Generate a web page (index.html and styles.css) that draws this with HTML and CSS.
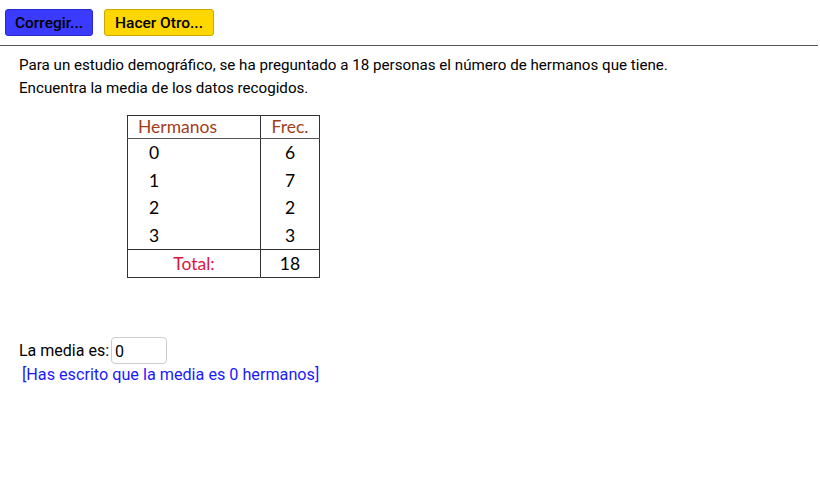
FILE: index.html
```html
<!DOCTYPE html>
<html>
<head>
<meta charset="utf-8">
<link rel="stylesheet" href="styles.css">
</head>
<body>
<div class="toolbar">
  <button class="btn btn-blue">Corregir...</button>
  <button class="btn btn-yellow">Hacer Otro...</button>
</div>
<div class="rule"></div>
<div class="content">
  <p class="statement">Para un estudio demográfico, se ha preguntado a 18 personas el número de hermanos que tiene.</p>
  <p class="statement">Encuentra la media de los datos recogidos.</p>
  <table class="freq">
    <thead>
      <tr><th class="c1">Hermanos</th><th class="c2">Frec.</th></tr>
    </thead>
    <tbody>
      <tr><td class="c1">0</td><td class="c2">6</td></tr>
      <tr><td class="c1">1</td><td class="c2">7</td></tr>
      <tr><td class="c1">2</td><td class="c2">2</td></tr>
      <tr><td class="c1">3</td><td class="c2">3</td></tr>
    </tbody>
    <tfoot>
      <tr><td class="total">Total:</td><td class="c2">18</td></tr>
    </tfoot>
  </table>
  <div class="answer">
    <span class="label">La media es:</span><span class="input">0</span>
  </div>
  <div class="feedback">[Has escrito que la media es 0 hermanos]</div>
</div>
</body>
</html>
```
FILE: styles.css
```css
html, body {
  margin: 0;
  padding: 0;
  background: #fff;
  font-family: Roboto, "Liberation Sans", sans-serif;
  color: #000;
}
.toolbar {
  display: flex;
  gap: 11px;
  padding: 9px 0 0 5px;
  height: 36px;
  box-sizing: border-box;
}
.btn {
  height: 27px;
  font-family: Roboto, sans-serif;
  font-size: 15.5px;
  font-weight: 500;
  color: #000;
  border-radius: 3px;
  padding: 0 6px;
  margin: 0;
  line-height: 27px;
}
.btn-blue {
  width: 88px;
  background: #3b3bff;
  border: 1px solid #2a2ad0;
}
.btn-yellow {
  width: 110px;
  background: #ffd700;
  border: 1px solid #c9a800;
}
.rule {
  margin-top: 9px;
  height: 1px;
  border-top: 1px solid #555;
  width: 818px;
}
.content {
  padding-left: 19px;
}
.statement {
  margin: 0;
  font-size: 15.15px;
  line-height: 23px;
}
.statement:first-child {
  margin-top: 7px;
}
.freq {
  margin: 15px 0 0 108px;
  border-collapse: collapse;
  font-family: Lato, "DejaVu Sans", sans-serif;
  font-size: 17.5px;
  border: 1px solid #333;
}
.freq th {
  font-weight: normal;
  color: #a0401a;
  height: 22px;
  padding: 0;
  border-bottom: 1px solid #555;
  line-height: 22px;
}
.freq th.c1 { text-align: left; padding-left: 10px; }
.freq .c1 { width: 122px; border-right: 1px solid #333; }
.freq .c2 { width: 58px; text-align: center; }
.freq th.c2 { border-left: 1px solid #333; }
.freq tbody td {
  height: 27.5px;
  padding: 0;
  line-height: 27px;
}
.freq tbody td.c1 { padding-left: 21px; width: 111px; }
.freq tfoot td {
  height: 27px;
  padding: 0;
  border-top: 1px solid #333;
  line-height: 27px;
}
.freq .total {
  color: #dc143c;
  text-align: center;
  border-right: 1px solid #333;
}
.answer {
  margin-top: 59px;
  display: flex;
  align-items: center;
  font-size: 16px;
}
.input {
  display: inline-block;
  width: 51px;
  height: 25px;
  line-height: 27px;
  border: 1px solid #ccc;
  border-radius: 4px;
  padding-left: 3px;
  margin-left: 2px;
}
.feedback {
  color: #1a1aff;
  font-size: 16.2px;
  padding-left: 3px;
  line-height: 20px;
  margin-top: 1px;
}
```
